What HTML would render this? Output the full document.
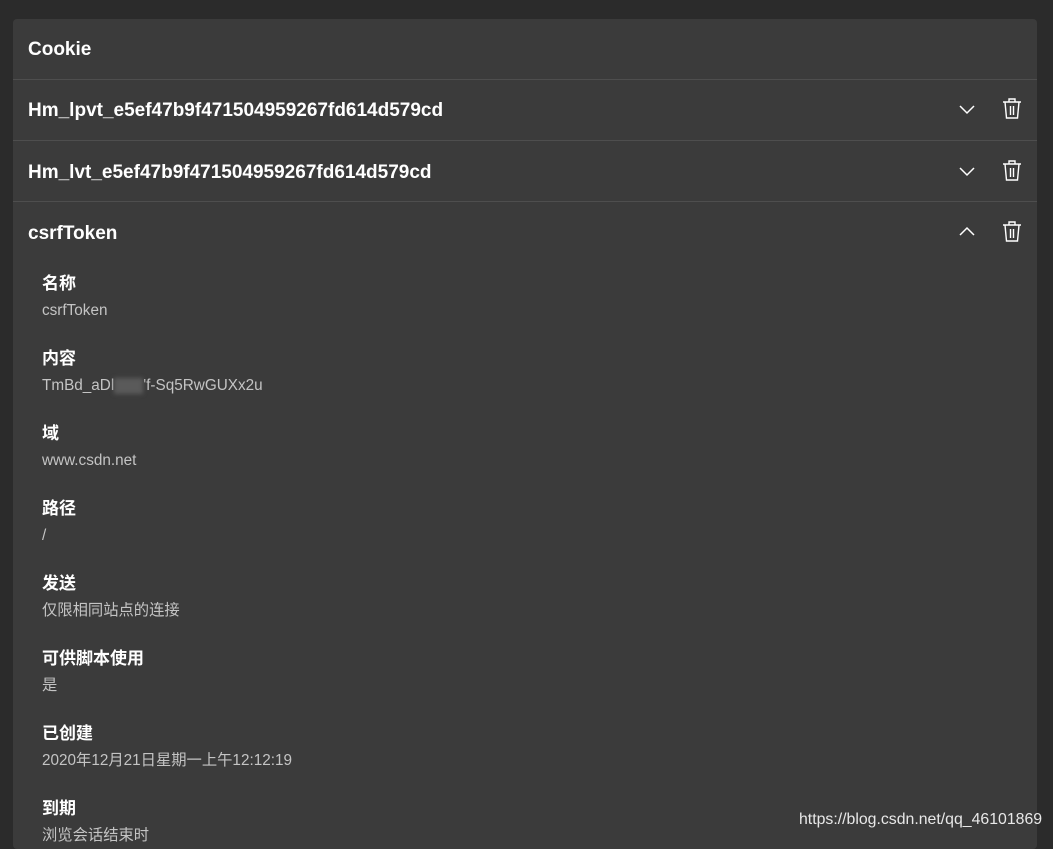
<!DOCTYPE html>
<html><head><meta charset="utf-8"><style>
body{margin:0;width:1053px;height:840px;background:#2b2b2b;overflow:hidden;font-family:"Segoe UI","Liberation Sans","Noto Sans CJK SC",sans-serif;color:#fff;position:relative}
.panel{position:absolute;left:13px;top:19px;width:1024px;height:830px;background:#3b3b3b;border-radius:4px}
.row{position:absolute;left:0;width:1024px;border-bottom:1px solid #4e4e4e}
.t{position:absolute;left:15px;font-weight:bold;font-size:19px;line-height:24px}
.lab{position:absolute;left:29px;font-weight:bold;font-size:17px;line-height:22px}
.val{position:absolute;left:29px;font-size:15.3px;line-height:18px;color:#c4c4c4}
.ic{position:absolute}
.wm{position:absolute;left:799px;top:811px;font-family:"Liberation Sans",sans-serif;font-size:16px;color:#e8e8e8;transform:scaleX(.99);transform-origin:left}
</style></head><body>
<div class="panel">
<div class="row" style="top:0;height:60px"></div>
<div class="row" style="top:61px;height:60px"></div>
<div class="row" style="top:122px;height:60px"></div>
<div class="t" style="top:19px">Cookie</div>
<div class="t" style="top:80px">Hm_lpvt_e5ef47b9f471504959267fd614d579cd</div>
<div class="t" style="top:142px">Hm_lvt_e5ef47b9f471504959267fd614d579cd</div>
<div class="t" style="top:203px">csrfToken</div>
<svg class="ic" style="left:945px;top:84px" width="18" height="12"><path d="M2 3l7 7 7-7" stroke="#fff" stroke-width="1.5" fill="none"/></svg>
<svg class="ic" style="left:945px;top:146px" width="18" height="12"><path d="M2 3l7 7 7-7" stroke="#fff" stroke-width="1.5" fill="none"/></svg>
<svg class="ic" style="left:945px;top:206px" width="18" height="12"><path d="M2 10l7-7 7 7" stroke="#fff" stroke-width="1.5" fill="none"/></svg>
<svg class="ic" style="left:988px;top:78px" width="22" height="24"><g stroke="#fff" stroke-width="1.4" fill="none"><path d="M2 5h18M8 5V2h6v3M4 5l1.5 16h11L18 5M9.5 9v9M12.5 9v9"/></g></svg>
<svg class="ic" style="left:988px;top:140px" width="22" height="24"><g stroke="#fff" stroke-width="1.4" fill="none"><path d="M2 5h18M8 5V2h6v3M4 5l1.5 16h11L18 5M9.5 9v9M12.5 9v9"/></g></svg>
<svg class="ic" style="left:988px;top:201px" width="22" height="24"><g stroke="#fff" stroke-width="1.4" fill="none"><path d="M2 5h18M8 5V2h6v3M4 5l1.5 16h11L18 5M9.5 9v9M12.5 9v9"/></g></svg>
<div class="lab" style="top:254px">名称</div><div class="val" style="top:283px">csrfToken</div>
<div class="lab" style="top:329px">内容</div><div class="val" style="top:358px">TmBd_aDl<span style="display:inline-block;width:29px;height:16px;background:#5a5a5a;vertical-align:middle;filter:blur(2px)"></span>'f-Sq5RwGUXx2u</div>
<div class="lab" style="top:404px">域</div><div class="val" style="top:433px">www.csdn.net</div>
<div class="lab" style="top:479px">路径</div><div class="val" style="top:508px">/</div>
<div class="lab" style="top:554px">发送</div><div class="val" style="top:583px">仅限相同站点的连接</div>
<div class="lab" style="top:629px">可供脚本使用</div><div class="val" style="top:658px">是</div>
<div class="lab" style="top:704px">已创建</div><div class="val" style="top:733px">2020年12月21日星期一上午12:12:19</div>
<div class="lab" style="top:779px">到期</div><div class="val" style="top:808px">浏览会话结束时</div>
</div>
<div class="wm">https://blog.csdn.net/qq_46101869</div>
</body></html>
